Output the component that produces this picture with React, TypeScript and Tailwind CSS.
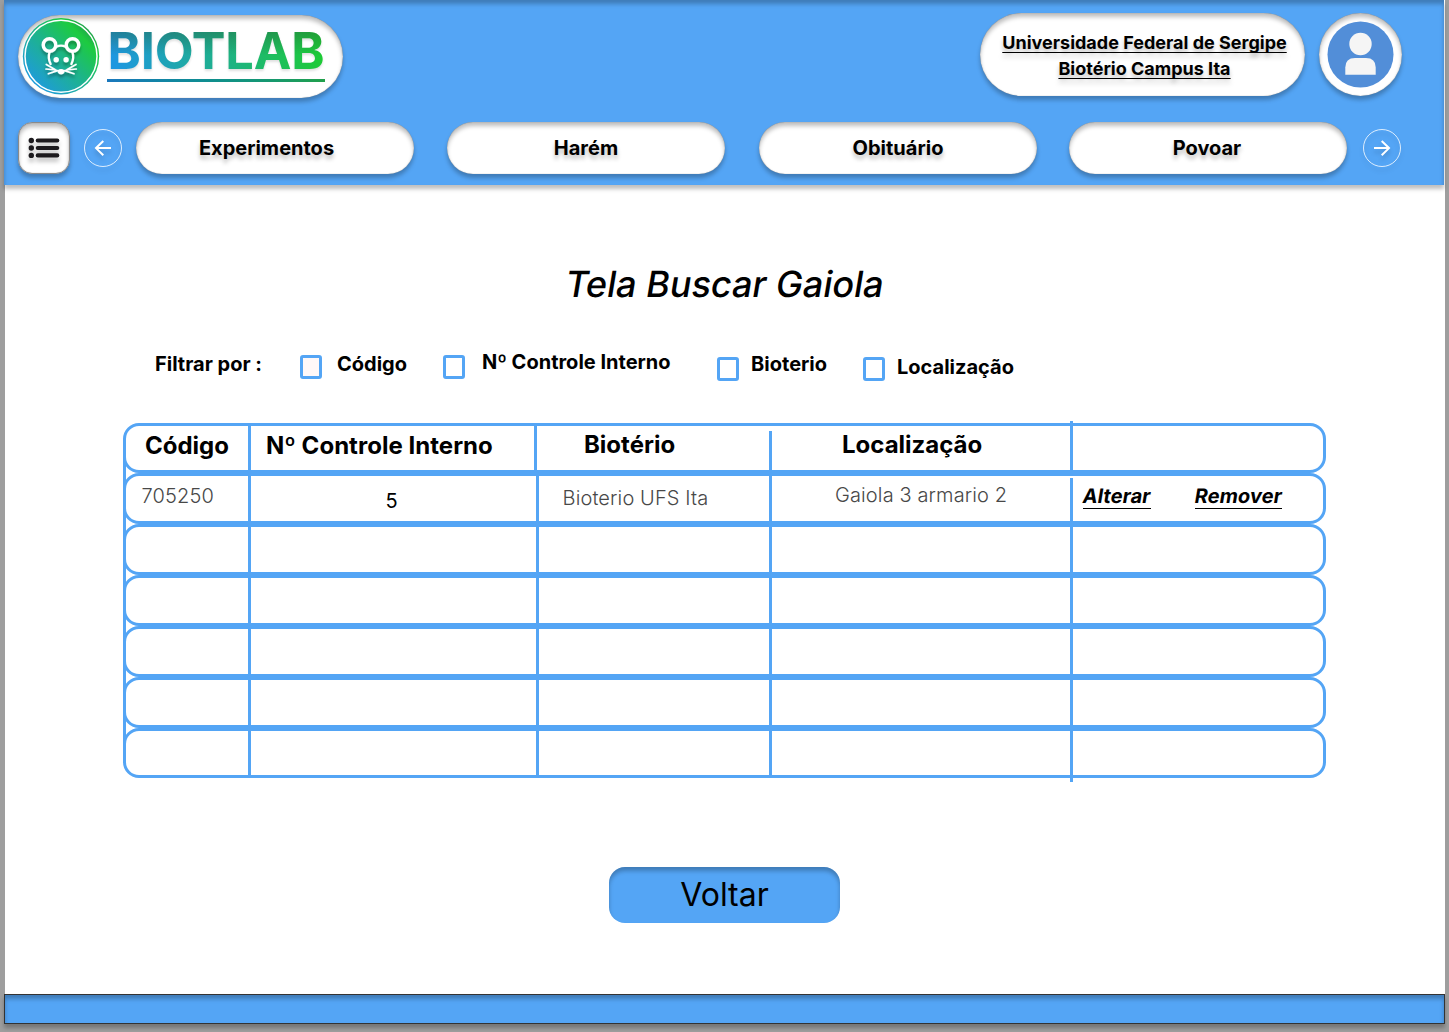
import type { ReactNode } from "react";

const RAISED =
  "bg-white shadow-[0_4px_4px_rgba(0,0,0,0.25),inset_0_4px_4px_rgba(0,0,0,0.25),inset_0_0_1px_rgba(0,0,0,0.45)]";

function MouseBadge() {
  return (
    <svg className="h-[78px] w-[78px] shrink-0" viewBox="22 17 78 78" fill="none">
      <defs>
        <linearGradient id="badge" x1="34" y1="84" x2="88" y2="30" gradientUnits="userSpaceOnUse">
          <stop stopColor="#1e9bdc" />
          <stop offset="0.5" stopColor="#1db48a" />
          <stop offset="0.88" stopColor="#1dcb3f" />
          <stop offset="1" stopColor="#1fa64a" />
        </linearGradient>
        <filter id="soft" x="30" y="30" width="64" height="60" filterUnits="userSpaceOnUse">
          <feDropShadow dx="0" dy="3" stdDeviation="1.8" floodColor="#000" floodOpacity="0.3" />
        </filter>
      </defs>
      <circle cx="61" cy="56.3" r="38.2" fill="url(#badge)" />
      <circle cx="61" cy="56.3" r="36" stroke="#fff" strokeWidth="1.5" />
      <g filter="url(#soft)" stroke="#fff" strokeWidth="2.3" strokeLinecap="round">
        <path d="M56 47C59 45.4 63 45.4 66 47" />
        <circle cx="49.5" cy="45" r="6.3" strokeWidth="3.4" />
        <circle cx="72.5" cy="45" r="6.3" strokeWidth="3.4" />
        <path d="M49.6 52C48.4 55.5 48.6 60 50.6 64" />
        <path d="M72.4 52C73.6 55.5 73.4 60 71.4 64" />
        <circle cx="56.2" cy="59.7" r="2.7" fill="#fff" stroke="none" />
        <circle cx="66.1" cy="59.7" r="2.7" fill="#fff" stroke="none" />
        <path d="M57.6 70.2Q61 68 64.6 70.2Q65.4 73.4 61.1 74.6Q57 73.4 57.6 70.2Z" fill="#fff" stroke="none" />
        <path d="M46.3 64.5L55 69.4M46 69L56 70M48.3 73.8L57.5 70.6" strokeWidth="1.7" />
        <path d="M76 64.5L67.2 69.4M76.3 69L66.2 70M74 73.8L64.6 70.6" strokeWidth="1.7" />
      </g>
    </svg>
  );
}

function Logo() {
  return (
    <div className={`flex h-[83px] w-[325px] items-start rounded-[42px] pl-1 ${RAISED}`}>
      <div className="mt-[2px] flex"><MouseBadge /></div>
      <div className="ml-[7px] flex w-[218px] flex-col">
        <div className="mt-[6px] bg-[linear-gradient(to_bottom,rgba(40,90,60,0.38)_12px,transparent_34px),linear-gradient(75deg,#1e97e0_5%,#1eb08c_50%,#1dcb35_95%)] bg-clip-text text-center text-[50.5px] leading-[59px] font-bold tracking-[-0.2px] whitespace-nowrap text-transparent drop-shadow-[0_2px_1px_rgba(0,0,0,0.12)]">
          BIOTLAB
        </div>
        <div className="-mt-px h-[3px] bg-linear-to-r from-[#1b78bd] to-[#21a04a]" />
      </div>
    </div>
  );
}

function ListButton() {
  return (
    <div className={`h-[52px] w-[52px] rounded-[14px] border border-[#8a8a8a] ${RAISED}`}>
      <svg className="h-[50px] w-[50px] drop-shadow-[0_4px_2px_rgba(0,0,0,0.25)]" viewBox="19 123 50 50" fill="#1c1a1d">
        {[140.5, 148, 155.4].map((y) => (
          <g key={y}>
            <circle cx="31.3" cy={y} r="2.7" />
            <rect x="35.7" y={y - 2.1} width="23.6" height="4.2" rx="2" />
          </g>
        ))}
      </svg>
    </div>
  );
}

function ArrowButton({ flip = false }: { flip?: boolean }) {
  return (
    <svg
      className="mt-[7px] h-[38px] w-[38px] shrink-0 drop-shadow-[0_4px_2px_rgba(0,0,0,0.15)]"
      viewBox="0 0 38 38"
      fill="none"
      stroke="#fff"
    >
      <circle cx="19" cy="19" r="18.5" strokeWidth="0.8" />
      <path
        d={flip ? "M11 19.1H26M18.7 12L26 19.1L18.7 26.2" : "M27 19.1H12M19.3 12L12 19.1L19.3 26.2"}
        strokeWidth="2"
      />
    </svg>
  );
}

function NavPill({ children, className }: { children: ReactNode; className: string }) {
  return (
    <div className={`h-[52px] w-[278px] rounded-[26px] text-center text-[20px] leading-[53px] font-bold [text-shadow:0_4px_4px_rgba(0,0,0,0.25)] ${RAISED} ${className}`}>
      {children}
    </div>
  );
}

function Header() {
  return (
    <header className="-ml-px h-[185px] w-[1440px] bg-[#54a5f5] shadow-[0_4px_4px_rgba(0,0,0,0.25),inset_0_4px_4px_rgba(0,0,0,0.25)]">
      <div className="flex h-[122px] items-start pt-[13px] pl-[14px]">
        <div className="mt-[2px]"><Logo /></div>
        <div className={`ml-[637px] h-[83px] w-[325px] rounded-[42px] pt-[17px] pl-[4px] text-center text-[18px] leading-[26px] font-bold whitespace-nowrap ${RAISED}`}>
          {["Universidade Federal de Sergipe", "Biotério Campus Ita"].map((line) => (
            <div key={line}>
              <span className="underline decoration-1 underline-offset-[3px] [text-decoration-skip-ink:none] [text-shadow:0_4px_4px_rgba(0,0,0,0.25)]">{line}</span>
            </div>
          ))}
        </div>
        <div className={`ml-[14px] h-[83px] w-[83px] rounded-full ${RAISED}`}>
          <svg className="h-[83px] w-[83px]" viewBox="0 0 83 83">
            <circle cx="41.5" cy="41.5" r="33" fill="#528ed8" />
            <circle cx="41.5" cy="31" r="11.2" fill="#f5f5f5" />
            <path d="M26.3 61.7V54.5Q26.3 45 36 45H47Q56.7 45 56.7 54.5V61.7Z" fill="#f5f5f5" />
          </svg>
        </div>
      </div>
      <nav className="flex items-start pl-[14px]">
        <ListButton />
        <div className="ml-[14px] flex"><ArrowButton /></div>
        <NavPill className="ml-[14px] pr-[17px]">Experimentos</NavPill>
        <NavPill className="ml-[33px]">Harém</NavPill>
        <NavPill className="ml-[34px]">Obituário</NavPill>
        <NavPill className="ml-[32px] pr-[2px]">Povoar</NavPill>
        <div className="ml-[16px] flex"><ArrowButton flip /></div>
      </nav>
    </header>
  );
}

const FILTERS = [
  { label: "Código", box: "mt-[3px] ml-[38px] bg-[#fff8f8]", text: "ml-[15px]" },
  { label: "Nº Controle Interno", box: "mt-[3px] ml-[36px]", text: "ml-[17px] -mt-[2px]" },
  { label: "Bioterio", box: "ml-[46px] mt-[5px]", text: "ml-[12.5px]" },
  { label: "Localização", box: "ml-[35.5px] mt-[5px]", text: "ml-[12.5px] mt-[3px]" },
];

function Filters() {
  return (
    <div className="mt-[46px] flex h-[30px] items-start pl-[150px] text-[20px] leading-[24px] font-bold whitespace-nowrap">
      <span>Filtrar por :</span>
      {FILTERS.map((f) => (
        <div key={f.label} className="flex items-start">
          <div className={`h-[24px] w-[22px] rounded-[3px] border-3 border-[#54a5f5] ${f.box}`} />
          <span className={f.text}>{f.label}</span>
        </div>
      ))}
    </div>
  );
}

const LINE = "shrink-0 border-r-3 border-[#54a5f5]";
const ROW = "flex w-[1203px] -ml-[3px] rounded-[16px] border-3 border-[#54a5f5] whitespace-nowrap";

function RowLink({ children }: { children: ReactNode }) {
  return (
    <a className="h-[25px] border-b border-black">
      <span className="block -skew-x-[9.4deg]">{children}</span>
    </a>
  );
}

function GaiolaTable() {
  return (
    <div className="relative mt-[41px] ml-[118px] h-[355px] w-[1203px] pl-[3px]">
      <div className="absolute top-[16px] bottom-[16px] left-0 w-[3px] bg-[#54a5f5]" />
      <div className={`${ROW} h-[50px] text-[24px] leading-[29px] font-bold`}>
        <div className={`${LINE} w-[125.4px] pt-[5px] pl-[19px]`}>Código</div>
        <div className={`${LINE} w-[286px] pt-[5px] pl-[14.6px] tracking-[0.03px]`}>Nº Controle Interno</div>
        <div className={`${LINE} mt-[5px] w-[234.6px] pl-[46.6px]`}><span className="block -mt-px">Biotério</span></div>
        <div className={`${LINE} -mt-[5px] w-[301px] pt-[9px] pl-[70px]`}>Localização</div>
      </div>
      <div className={`${ROW} h-[51px] text-[20px] leading-[24px] font-[340] tracking-[0.12px] text-[#484848]`}>
        <div className={`${LINE} w-[125.4px] pt-[8px] pl-[15.6px]`}>705250</div>
        <div className={`${LINE} w-[287.6px] pt-[13px] pl-[134px] font-normal text-black`}>5</div>
        <div className={`${LINE} w-[233px] pt-[10px] pl-[23.6px]`}>Bioterio UFS Ita</div>
        <div className={`${LINE} mt-[2px] w-[301px] pt-[5px] pl-[63px]`}>Gaiola 3 armario 2</div>
        <div className="flex items-start gap-[44px] pt-[8px] pl-[10px] font-bold tracking-[0.05px] text-black">
          <RowLink>Alterar</RowLink>
          <RowLink>Remover</RowLink>
        </div>
      </div>
      {[0, 1, 2, 3].map((row) => (
        <div key={row} className={`${ROW} h-[51px]`}>
          <div className={`${LINE} w-[125.4px]`} />
          <div className={`${LINE} w-[287.6px]`} />
          <div className={`${LINE} w-[233px]`} />
          <div className={`${LINE} w-[301px]`} />
        </div>
      ))}
      <div className={`${ROW} h-[50px]`}>
        <div className={`${LINE} -mb-[3px] w-[125px]`} />
        <div className={`${LINE} w-[288px]`} />
        <div className={`${LINE} w-[233px]`} />
        <div className={`${LINE} -mb-[7px] w-[301px]`} />
      </div>
    </div>
  );
}

export default function App() {
  return (
    <div className="flex h-[1032px] w-[1449px] flex-col overflow-hidden bg-[#9e9e9e] font-['Inter',sans-serif] text-black [font-optical-sizing:none]">
      <main className="ml-[5px] h-[994px] w-[1440px] shrink-0 bg-white">
        <Header />
        <h1 className="mt-[77px] -skew-x-[9.4deg] text-center text-[36px] leading-[44px] font-medium">Tela Buscar Gaiola</h1>
        <Filters />
        <GaiolaTable />
        <div className="mt-[89px] ml-[604px] h-[56px] w-[231px] rounded-[16px] bg-[#54a5f5] text-center text-[32px] leading-[56px] shadow-[inset_0_4px_4px_rgba(0,0,0,0.25)]">
          Voltar
        </div>
      </main>
      <footer className="ml-[4px] h-[30px] w-[1441px] shrink-0 border border-[#333] bg-[#54a5f5] shadow-[0_4px_4px_rgba(0,0,0,0.25),inset_0_4px_4px_rgba(0,0,0,0.25)]" />
    </div>
  );
}
